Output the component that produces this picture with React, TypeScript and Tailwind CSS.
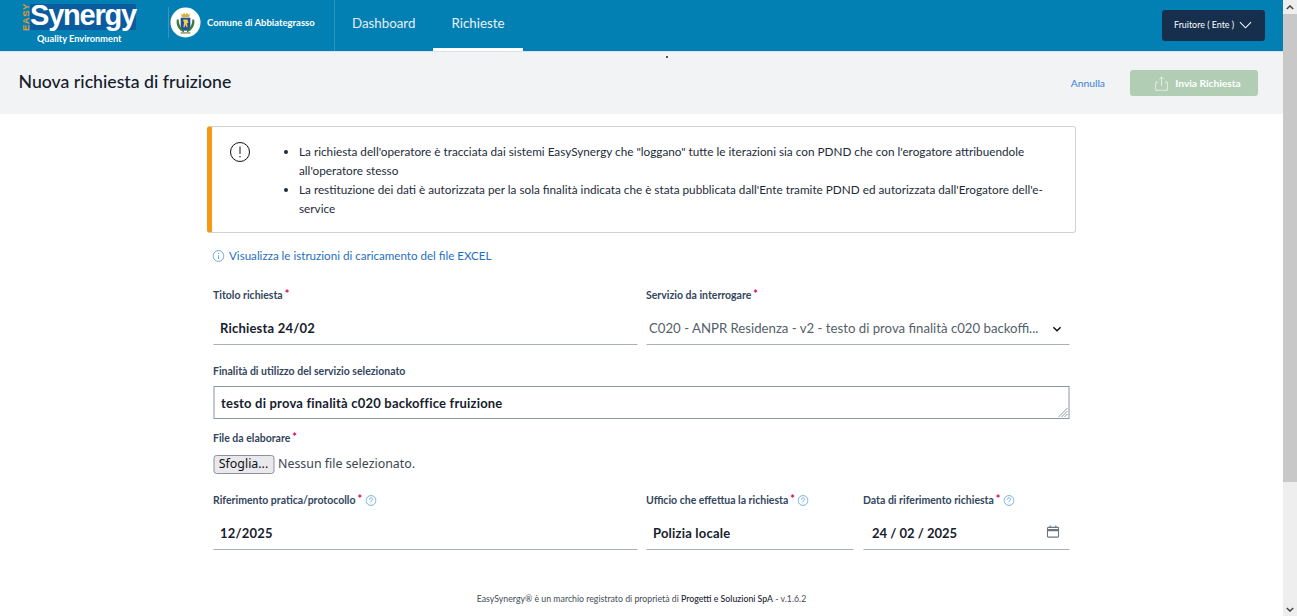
const F = "[font-family:Lato,'Noto_Sans',sans-serif]";

function Req() {
  return <span className="text-[#d9005b] ml-[2px] text-[11px] relative -top-[2px]">*</span>;
}

function Help() {
  return (
    <svg viewBox="0 0 16 16" className="w-[11px] h-[11px] ml-[3px] shrink-0" fill="none" stroke="#3f8fd8" strokeWidth="1">
      <circle cx="8" cy="8" r="7.2" />
      <path d="M5.8 6.2C5.8 4.9 6.8 4 8 4s2.2.9 2.2 2.1c0 1.7-2.2 1.8-2.2 3.5" strokeLinecap="round" />
      <circle cx="8" cy="11.8" r=".6" fill="#3f8fd8" stroke="none" />
    </svg>
  );
}

function Label({ children, help }: { children: React.ReactNode; help?: boolean }) {
  return (
    <div className="flex items-center h-[16px] text-[10.5px] font-bold text-[#33465c] leading-none">
      <span>{children}</span>
      <Req />
      {help && <Help />}
    </div>
  );
}

function Field({ value, className = "" }: { value: string; className?: string }) {
  return (
    <div className={"h-[34px] pt-[2px] border-b border-[#a9afb7] px-[7px] flex items-center text-[13px] font-bold text-[#17212e] tracking-[0.2px] " + className}>
      {value}
    </div>
  );
}

function Crest() {
  return (
    <svg viewBox="0 0 32 32" className="w-[31px] h-[31px]">
      <circle cx="16" cy="16" r="15.5" fill="#fff" />
      <path d="M7 13c-1 6 2 11 7 13l1-2c-4-2-6-6-6-11zM25 13c1 6-2 11-7 13l-1-2c4-2 6-6 6-11z" fill="#3c7a3a" />
      <path d="M11.5 6.5l1.5 1.5 1.5-2 1.5 2 1.5-2 1.5 2 1.5-1.5-.6 4H12.1z" fill="#d4b13f" />
      <path d="M11 11h10v8c0 3-2.5 4.5-5 5.5-2.5-1-5-2.500-5-5.500z" fill="#1f4f9c" />
      <path d="M14 13h4l1 3-1.500 1 .8 4h-1.300l-1-3-1 3h-1.200l.7-5-1-2z" fill="#f0d04a" />
      <path d="M11 26h10v1.500H11z" fill="#8f8f6a" />
    </svg>
  );
}

export default function App() {
  return (
    <div className={"flex h-[616px] w-full overflow-hidden bg-white " + F}>
      <div className="flex-1 min-w-0 flex flex-col relative">
        <header className="h-[52px] shrink-0 bg-[#0380b3] flex items-stretch text-white border-b border-[#d5e4ec]">
          <div className="w-[168px] shrink-0 flex flex-col items-start pl-[22px]">
            <div className="flex items-start mt-[4px] h-[27px]">
              <span className="[writing-mode:vertical-rl] rotate-180 text-[#e5992a] text-[9.5px] font-bold leading-[8px] w-[8px] h-[27px] text-center tracking-[0.5px] [font-family:'Liberation_Sans',sans-serif]">EASY</span>
              <span className="bg-[#0a5c9e] h-[26px] w-[106px] flex items-center justify-center text-[29px] font-bold leading-none tracking-[-1.2px] [font-family:'Liberation_Sans',sans-serif] pb-[4px]">Synergy</span>
            </div>
            <span className="text-[9.2px] font-bold leading-none mt-[3px] ml-[15px] whitespace-nowrap">Quality Environment</span>
          </div>
          <div className="w-[166px] shrink-0 flex items-center">
            <div className="h-[31px] border-l border-[#4a8fb5] mb-[7px] flex items-center pl-[1px]">
              <Crest />
            </div>
            <span className="text-[9.5px] font-bold ml-[6px] mb-[5px] whitespace-nowrap">Comune di Abbiategrasso</span>
          </div>
          <nav className="border-l border-[#2f95c0] flex items-stretch pl-[17px] text-[13.3px]">
            <div className="flex items-center mr-[18px] pb-[4px] w-[63px] whitespace-nowrap text-[#e4eef4]">Dashboard</div>
            <div className="w-[90px] flex items-center justify-center pb-[1px] border-b-[3px] border-white whitespace-nowrap text-[#e9f2f7]">Richieste</div>
          </nav>
          <div className="flex-1" />
          <div className="flex items-center pr-[18px] mb-[1px]">
            <div className="w-[103px] h-[31px] bg-[#162f4d] rounded-[3px] flex items-center pl-[12px] text-[8.9px]">
              <span className="whitespace-nowrap">Fruitore ( Ente )</span>
              <svg viewBox="0 0 14 8" className="w-[13px] h-[8px] ml-[5px]" fill="none" stroke="#fff" strokeWidth="1.100"><path d="M1 1l6 6 6-6" /></svg>
            </div>
          </div>
        </header>

        <div className="h-[62px] shrink-0 bg-[#f2f3f5] flex items-center pl-[19px] pr-[25px] relative">
          <h1 className="text-[17.7px] font-medium text-[#14202c] leading-none mb-[3px] -ml-[0.5px]">Nuova richiesta di fruizione</h1>
          <span className="absolute left-[666px] top-[4px] w-[1.500px] h-[1.500px] bg-[#222] rounded-full" />
          <div className="flex-1" />
          <a className="text-[10.300px] text-[#3b82d6] mr-[25px] pt-[1px]">Annulla</a>
          <div className="w-[128px] h-[26px] -mt-[1px] bg-[#b1ceb5] rounded-[3px] flex items-center justify-center pl-[8px] pt-[2px] text-white text-[10.200px] font-bold">
            <svg viewBox="0 0 14 16" className="w-[13px] h-[15px] mr-[7px] mb-[1px]" fill="none" stroke="#e4efe5" strokeWidth="1">
              <path d="M3.500 6.500H.7v8.800h12.600V6.500h-2.800M7 10.500V1M4.500 3.500L7 1l2.500 2.500" />
            </svg>
            Invia Richiesta
          </div>
        </div>

        <main className="flex-1 flex flex-col items-center">
          <div className="w-[869px] h-[107px] mt-[12px] border border-[#cfd2d6] border-l-[5px] border-l-[#f59a13] rounded-[3px] flex shrink-0 text-[11.750px] text-[#1e2b3a] leading-[19px]">
            <div className="w-[76px] shrink-0 pl-[18px] pt-[15px]">
              <svg viewBox="0 0 20 20" className="w-[20px] h-[20px]" fill="none" stroke="#111" strokeWidth="1">
                <circle cx="10" cy="10" r="9.500" />
                <path d="M10 4.500v7.500" />
                <circle cx="10" cy="14.800" r=".7" fill="#111" stroke="none" />
              </svg>
            </div>
            <ul className="list-disc pl-[11px] pt-[15px] pr-[30px] flex-1">
              <li>La richiesta dell'operatore è tracciata dai sistemi EasySynergy che "loggano" tutte le iterazioni sia con PDND che con l'erogatore attribuendole all'operatore stesso</li>
              <li>La restituzione dei dati è autorizzata per la sola finalità indicata che è stata pubblicata dall'Ente tramite PDND ed autorizzata dall'Erogatore dell'e-service</li>
            </ul>
          </div>

          <div className="w-[856px] shrink-0 -translate-x-[0.5px]">
            <div className="flex items-center h-[16px] mt-[15px] -ml-[1px] text-[11.600px] text-[#1f6fc0]">
              <svg viewBox="0 0 16 16" className="w-[12px] h-[12px] mr-[5px]" fill="none" stroke="#3f8fd8" strokeWidth="1">
                <circle cx="8" cy="8" r="7.200" />
                <path d="M8 7v5" />
                <circle cx="8" cy="4.700" r=".7" fill="#3f8fd8" stroke="none" />
              </svg>
              Visualizza le istruzioni di caricamento del file EXCEL
            </div>

            <div className="grid grid-cols-[424px_423px] gap-x-[9px] mt-[23px]">
              <div>
                <Label>Titolo richiesta</Label>
                <Field value="Richiesta 24/02" className="mt-[8px]" />
              </div>
              <div>
                <Label>Servizio da interrogare</Label>
                <div className="mt-[8px] h-[34px] pt-[2px] border-b border-[#a9afb7] pl-[3px] pr-[8px] flex items-center justify-between text-[13.200px] text-[#555f6a]">
                  <span className="whitespace-nowrap">C020 - ANPR Residenza - v2 - testo di prova finalità c020 backoffi...</span>
                  <svg viewBox="0 0 10 6" className="w-[9px] h-[6px]" fill="none" stroke="#111" strokeWidth="1.600"><path d="M1 1l4 4 4-4" /></svg>
                </div>
              </div>
            </div>

            <div className="mt-[18px]">
              <div className="flex items-center h-[16px] text-[10.500px] font-bold text-[#33465c] leading-none">Finalità di utilizzo del servizio selezionato</div>
              <div className="mt-[7px] h-[33px] pt-[2px] border border-[#8c96a3] px-[7px] flex items-center text-[13px] font-bold tracking-[0.2px] text-[#17212e] relative">
                testo di prova finalità c020 backoffice fruizione
                <svg viewBox="0 0 12 12" className="w-[12px] h-[12px] absolute right-0 bottom-0" stroke="#7a7f85" strokeWidth=".8"><path d="M11 2L2 11M11 5l-6 6M11 8l-3 3" /></svg>
              </div>
            </div>

            <div className="mt-[11px]">
              <Label>File da elaborare</Label>
              <div className="flex items-center mt-[9px] h-[19px]">
                <div className="w-[61px] h-[19px] bg-[#e9e9ed] border border-[#8f8f9d] rounded-[3px] flex items-center justify-center text-[12.400px] text-[#111] [font-family:'Noto_Sans',sans-serif]">Sfoglia...</div>
                <span className="ml-[4px] text-[12.400px] text-[#3c4650] [font-family:'Noto_Sans',sans-serif]">Nessun file selezionato.</span>
              </div>
            </div>

            <div className="grid grid-cols-[424px_207px_207px] gap-x-[9px] mt-[18px]">
              <div>
                <Label help>Riferimento pratica/protocollo</Label>
                <Field value="12/2025" className="mt-[8px]" />
              </div>
              <div>
                <Label help>Ufficio che effettua la richiesta</Label>
                <Field value="Polizia locale" className="mt-[8px]" />
              </div>
              <div className="ml-[1px]">
                <Label help>Data di riferimento richiesta</Label>
                <div className="mt-[8px] h-[34px] pt-[2px] border-b border-[#a9afb7] pl-[9px] pr-[10px] flex items-center justify-between text-[13px] font-bold text-[#17212e]">
                  <span>24 / 02 / 2025</span>
                  <svg viewBox="0 0 14 14" className="w-[13px] h-[13px] mb-[4px]" fill="none" stroke="#6b7580" strokeWidth="1.200">
                    <rect x="1" y="2.500" width="12" height="10.500" rx="1" />
                    <path d="M1 5.500h12" strokeWidth="2.400" />
                    <path d="M4 .5v2M10 .5v2" />
                  </svg>
                </div>
              </div>
            </div>
          </div>

          <footer className="mt-[45px] text-[8.750px] text-[#444c55] leading-none">
            EasySynergy® è un marchio registrato di proprietà di <span className="text-[#1c2530] font-medium">Progetti e Soluzioni SpA</span> - v.1.6.2
          </footer>
        </main>
      </div>

      <div className="w-[14px] shrink-0 bg-[#eeeeee] flex flex-col">
        <div className="h-[14px] flex items-center justify-center">
          <svg viewBox="0 0 10 6" className="w-[8px] h-[5px]" fill="none" stroke="#444" strokeWidth="1.800"><path d="M1 5l4-4 4 4" /></svg>
        </div>
        <div className="h-[468px] bg-[#c8c8c8]" />
        <div className="flex-1" />
        <div className="h-[14px] flex items-center justify-center">
          <svg viewBox="0 0 10 6" className="w-[8px] h-[5px]" fill="none" stroke="#444" strokeWidth="1.800"><path d="M1 1l4 4 4-4" /></svg>
        </div>
      </div>
    </div>
  );
}
